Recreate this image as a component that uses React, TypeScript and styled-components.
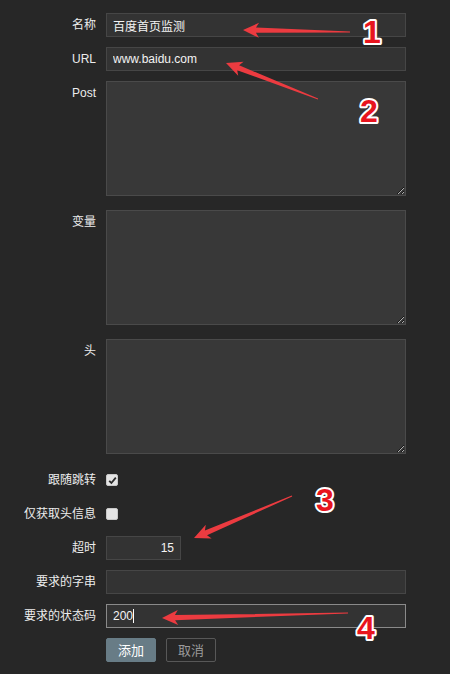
import React from "react";
import styled, { createGlobalStyle } from "styled-components";

const Global = createGlobalStyle`
  html, body { margin: 0; padding: 0; background: #272727; }
  body { font-family: "Liberation Sans", "Noto Sans CJK SC", sans-serif; }
  * { box-sizing: border-box; }
`;

const Page = styled.div`
  position: relative;
  width: 450px;
  min-height: 674px;
  background: #272727;
  padding-top: 13px;
`;

const Form = styled.form`
  display: grid;
  grid-template-columns: 96px 300px;
  column-gap: 10px;
  row-gap: 10px;
  align-items: start;
`;

const Label = styled.label`
  text-align: right;
  font-size: 12px;
  line-height: 24px;
  color: #ececec;
  white-space: nowrap;
`;

const Input = styled.input<{ $w?: number; $right?: boolean; $focus?: boolean }>`
  display: block;
  width: ${(p) => (p.$w ? `${p.$w}px` : "100%")};
  height: 24px;
  margin: 0;
  padding: 0 6px;
  background: #333333;
  border: 1px solid ${(p) => (p.$focus ? "#8a8a8a" : "#464646")};
  color: #f4f4f4;
  font-family: "Liberation Sans", "Noto Sans CJK SC", sans-serif;
  font-size: 12px;
  text-align: ${(p) => (p.$right ? "right" : "left")};
  outline: none;
`;

const Area = styled.textarea`
  display: block;
  width: 100%;
  height: 115px;
  margin: 0 0 4px;
  padding: 4px 6px;
  background: #383838;
  border: 1px solid #4a4a4a;
  color: #f0f0f0;
  font-family: "Liberation Sans", sans-serif;
  font-size: 12px;
  resize: both;
  outline: none;
`;

const CheckCell = styled.div`
  height: 24px;
  display: flex;
  align-items: center;
`;

const Box = styled.span`
  width: 12px;
  height: 12px;
  background: #e4e4e4;
  border: 1px solid #c8c8c8;
  border-radius: 2px;
  display: flex;
  align-items: center;
  justify-content: center;
`;

const FieldWrap = styled.div`
  position: relative;
`;

const Caret = styled.span`
  position: absolute;
  left: 27px;
  top: 5px;
  width: 1px;
  height: 14px;
  background: #ffffff;
`;

const Buttons = styled.div`
  display: flex;
  gap: 10px;
`;

const Button = styled.button<{ $primary?: boolean }>`
  width: 50px;
  height: 24px;
  margin: 0;
  padding: 0;
  font-family: "Noto Sans CJK SC", sans-serif;
  font-size: 13px;
  line-height: 22px;
  border-radius: 2px;
  cursor: pointer;
  background: ${(p) => (p.$primary ? "#687c86" : "transparent")};
  border: 1px solid ${(p) => (p.$primary ? "#687c86" : "#585858")};
  color: ${(p) => (p.$primary ? "#ffffff" : "#9a9a9a")};
`;

const Overlay = styled.svg`
  position: absolute;
  left: 0;
  top: 0;
  pointer-events: none;
`;

const Num = styled.text`
  font-family: "Liberation Sans", sans-serif;
  font-weight: 700;
  font-size: 32px;
  fill: #e8141e;
  stroke: #ffffff;
  stroke-width: 4px;
  paint-order: stroke;
  stroke-linejoin: round;
`;

function arrowPoints(tx: number, ty: number, hx: number, hy: number) {
  const dx = hx - tx;
  const dy = hy - ty;
  const len = Math.hypot(dx, dy);
  const ux = dx / len;
  const uy = dy / len;
  const nx = -uy;
  const ny = ux;
  const headLen = 16;
  const headW = 7.5;
  const shaftW = 2.6;
  const bx = hx - ux * headLen;
  const by = hy - uy * headLen;
  const nb = (bx: number, by: number, w: number) => [bx + nx * w, by + ny * w];
  const pts = [
    [tx + nx * 0.4, ty + ny * 0.4],
    nb(bx + ux * 3, by + uy * 3, shaftW),
    nb(bx, by, headW),
    [hx, hy],
    nb(bx, by, -headW),
    nb(bx + ux * 3, by + uy * 3, -shaftW),
    [tx - nx * 0.4, ty - ny * 0.4],
  ];
  return pts.map((p) => `${p[0].toFixed(1)},${p[1].toFixed(1)}`).join(" ");
}

const Arrow: React.FC<{ t: [number, number]; h: [number, number] }> = ({ t, h }) => (
  <polygon points={arrowPoints(t[0], t[1], h[0], h[1])} fill="#ec3b40" />
);

export default function App() {
  return (
    <Page>
      <Global />
      <Form onSubmit={(e) => e.preventDefault()}>
        <Label>名称</Label>
        <Input defaultValue="百度首页监测" />

        <Label>URL</Label>
        <Input defaultValue="www.baidu.com" />

        <Label>Post</Label>
        <Area />

        <Label>变量</Label>
        <Area />

        <Label>头</Label>
        <Area />

        <Label>跟随跳转</Label>
        <CheckCell>
          <Box>
            <svg width="9" height="9" viewBox="0 0 9 9">
              <path d="M1.2 4.8 L3.4 7 L7.8 1.6" stroke="#2a2a2a" strokeWidth="1.8" fill="none" />
            </svg>
          </Box>
        </CheckCell>

        <Label>仅获取头信息</Label>
        <CheckCell>
          <Box />
        </CheckCell>

        <Label>超时</Label>
        <Input $w={75} $right defaultValue="15" />

        <Label>要求的字串</Label>
        <Input />

        <Label>要求的状态码</Label>
        <FieldWrap>
          <Input $focus defaultValue="200" />
          <Caret />
        </FieldWrap>

        <span />
        <Buttons>
          <Button $primary type="button">添加</Button>
          <Button type="button">取消</Button>
        </Buttons>
      </Form>

      <Overlay width="450" height="674" viewBox="0 0 450 674">
        <Arrow t={[350, 32]} h={[243, 30]} />
        <Arrow t={[318, 99]} h={[226, 63]} />
        <Arrow t={[292, 496]} h={[194, 538]} />
        <Arrow t={[348, 613]} h={[162, 618]} />
        <Num x="363" y="43">1</Num>
        <Num x="360" y="122">2</Num>
        <Num x="316" y="511">3</Num>
        <Num x="357" y="639">4</Num>
      </Overlay>
    </Page>
  );
}
